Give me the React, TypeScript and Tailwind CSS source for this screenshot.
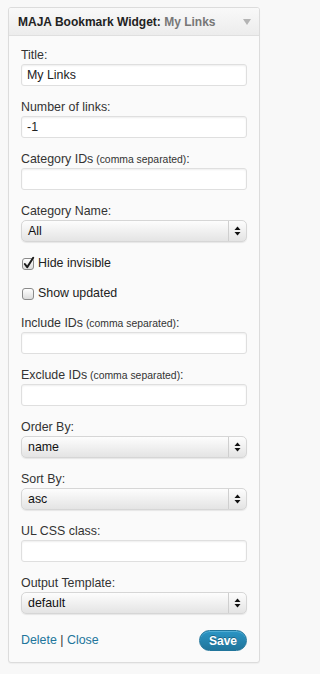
import React from "react";

const font = { fontFamily: '"Liberation Sans", Arial, Helvetica, sans-serif' };

function Label({ text, small }: { text: string; small?: string }) {
  return (
    <div className="block h-[17px] leading-[17px] text-[12.4px] text-[#333] whitespace-nowrap">
      {text}
      {small && <span className="text-[10.4px]"> {small}</span>}
      {small ? ":" : ""}
    </div>
  );
}

function TextInput({ value = "" }: { value?: string }) {
  return (
    <div className="h-[22px] w-full rounded-[3px] border border-[#dfdfdf] bg-white px-[5px] text-[12.4px] leading-[20px] text-[#222] shadow-[inset_0_1px_2px_rgba(0,0,0,0.07)]">
      {value}
    </div>
  );
}

function Select({ value }: { value: string }) {
  return (
    <div className="flex h-[22px] w-full items-stretch rounded-[5px] border border-[#d6d6d6] bg-gradient-to-b from-[#fdfdfd] to-[#e4e4e4] shadow-[0_1px_1px_rgba(0,0,0,0.08)]">
      <div className="flex-1 pl-[6px] text-[12.4px] leading-[20px] text-[#111]">{value}</div>
      <div className="flex w-[18px] items-center justify-center border-l border-[#cfcfcf]">
        <svg width="7" height="10" viewBox="0 0 7 10">
          <polygon points="3.5,0.5 6.5,4 0.5,4" fill="#111" />
          <polygon points="0.5,6 6.5,6 3.5,9.5" fill="#111" />
        </svg>
      </div>
    </div>
  );
}

function Field({ label, small, children }: { label: string; small?: string; children: React.ReactNode }) {
  return (
    <div className="mb-[13px]">
      <Label text={label} small={small} />
      {children}
    </div>
  );
}

function Checkbox({ checked, label }: { checked?: boolean; label: string }) {
  return (
    <div className="mb-[13px] flex h-[17px] items-center">
      <div className="relative ml-px h-[12px] w-[12px] rounded-[3px] border border-[#8a8a8a] bg-gradient-to-b from-[#ffffff] to-[#dcdcdc]">
        {checked && (
          <svg className="absolute left-[-1px] top-[-2px] overflow-visible" width="13" height="13" viewBox="0 0 13 13">
            <path d="M2.8 7 L5.2 10.2 L11.2 0.8" stroke="#1a1a1a" strokeWidth="2" fill="none" strokeLinecap="round" strokeLinejoin="round" />
          </svg>
        )}
      </div>
      <span className="ml-[4px] text-[12.4px] text-[#222]">{label}</span>
    </div>
  );
}

export default function App() {
  return (
    <div className="min-h-[674px] bg-[#f8f8f8] pl-[8px] pt-[7px]" style={font}>
      <div className="w-[252px] overflow-hidden rounded-[3px] border border-[#dcdcdc] bg-[#fafafa] shadow-[0_1px_1px_rgba(0,0,0,0.04)]">
        <div className="flex h-[28px] items-center justify-between border-b border-[#dfdfdf] bg-gradient-to-b from-[#f9f9f9] to-[#ececec] pl-[9px] pr-[8px]">
          <div className="text-[12px] font-bold text-[#222] whitespace-nowrap">
            MAJA Bookmark Widget: <span className="text-[#777]">My Links</span>
          </div>
          <svg width="8" height="6" viewBox="0 0 8 6">
            <polygon points="0,0 8,0 4,6" fill="#b4b4b4" />
          </svg>
        </div>
        <div className="px-[12px] pt-[11px] pb-[11px]">
          <Field label="Title:">
            <TextInput value="My Links" />
          </Field>
          <Field label="Number of links:">
            <TextInput value="-1" />
          </Field>
          <Field label="Category IDs" small="(comma separated)">
            <TextInput />
          </Field>
          <Field label="Category Name:">
            <Select value="All" />
          </Field>
          <Checkbox checked label="Hide invisible" />
          <Checkbox label="Show updated" />
          <Field label="Include IDs" small="(comma separated)">
            <TextInput />
          </Field>
          <Field label="Exclude IDs" small="(comma separated)">
            <TextInput />
          </Field>
          <Field label="Order By:">
            <Select value="name" />
          </Field>
          <Field label="Sort By:">
            <Select value="asc" />
          </Field>
          <Field label="UL CSS class:">
            <TextInput />
          </Field>
          <div>
            <Label text="Output Template:" />
            <Select value="default" />
          </div>
          <div className="mt-[16px] flex h-[21px] items-center justify-between">
            <div className="text-[12.4px] text-[#333]">
              <span className="text-[#21759b]">Delete</span> | <span className="text-[#21759b]">Close</span>
            </div>
            <div className="flex h-[21px] w-[48px] items-center justify-center rounded-full border border-[#21759b] bg-gradient-to-b from-[#2a95c5] to-[#21759b] text-[12px] font-bold text-white shadow-[inset_0_1px_0_rgba(120,200,230,0.5)] [text-shadow:0_-1px_0_rgba(0,0,0,0.3)]">
              Save
            </div>
          </div>
        </div>
      </div>
    </div>
  );
}
